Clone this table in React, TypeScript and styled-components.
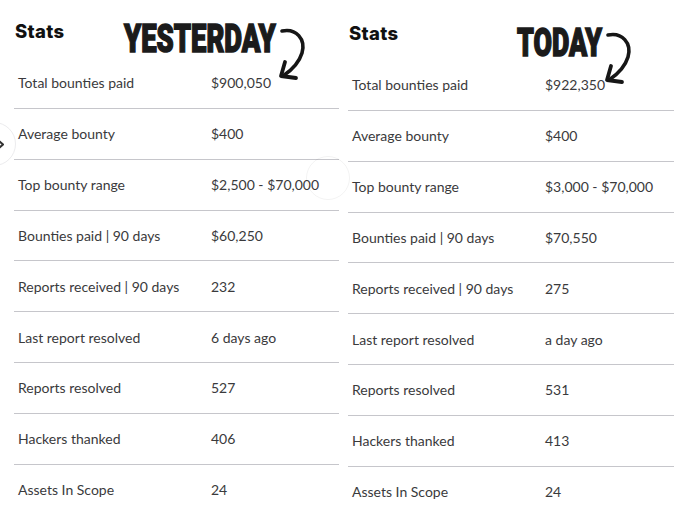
import React, { useLayoutEffect, useRef, useState } from "react";
import styled, { createGlobalStyle } from "styled-components";

const GlobalStyle = createGlobalStyle`
  html, body {
    margin: 0;
    padding: 0;
    background: #fff;
  }
  body {
    font-family: Lato, "Open Sans", Arial, sans-serif;
    -webkit-font-smoothing: antialiased;
  }
`;

const Page = styled.div`
  position: relative;
  width: 680px;
  height: 515px;
  overflow: hidden;
  display: flex;
  gap: 9px;
  padding-left: 14px;
  box-sizing: border-box;
`;

const Panel = styled.section<{ $shift: number; $width: number }>`
  position: relative;
  width: ${(p) => p.$width}px;
  padding-top: ${(p) => p.$shift}px;
`;

const Title = styled.h3`
  margin: 20px 0 16px 1px;
  height: 22px;
  line-height: 22px;
  font-family: Inter, "Noto Sans", sans-serif;
  font-weight: 800;
  font-size: 18.5px;
  color: #111;
  letter-spacing: 0.3px;
`;

const Row = styled.div`
  display: grid;
  grid-template-columns: 193px 1fr;
  align-items: center;
  height: 49.85px;
  padding-left: 4px;
  border-bottom: 1px solid #c6c6cb;
  font-size: 14px;
  color: #3a3a3c;

  &:last-child {
    border-bottom: none;
  }
`;

const Label = styled.span``;
const Value = styled.span``;

const Annotation = styled.div<{ $left: number; $top: number }>`
  position: absolute;
  left: ${(p) => p.$left}px;
  top: ${(p) => p.$top}px;
  display: flex;
  align-items: flex-start;
  gap: 1px;
`;

const StampBox = styled.div<{ $width: number }>`
  width: ${(p) => p.$width}px;
  height: 39px;
  overflow: visible;
`;

const StampText = styled.div`
  display: inline-block;
  font-family: Roboto, "DejaVu Sans", sans-serif;
  font-weight: 900;
  font-size: 39px;
  line-height: 39px;
  color: #1b1b1b;
  -webkit-text-stroke: 1.6px #1b1b1b;
  white-space: nowrap;
  transform-origin: left top;
`;

const ArrowSvg = styled.svg`
  flex: none;
  margin-top: 3px;
  width: 32px;
  height: 60px;
  overflow: visible;
`;

const NavCircle = styled.div<{ $left: number; $top: number; $faint?: boolean }>`
  position: absolute;
  left: ${(p) => p.$left}px;
  top: ${(p) => p.$top}px;
  width: 44px;
  height: 44px;
  border-radius: 50%;
  box-sizing: border-box;
  background: ${(p) => (p.$faint ? "transparent" : "#fff")};
  border: 1px solid ${(p) => (p.$faint ? "rgba(0,0,0,0.05)" : "#ececee")};
  display: flex;
  align-items: center;
  justify-content: flex-end;
  padding-right: 11px;
`;

function Stamp({ text, width }: { text: string; width: number }) {
  const ref = useRef<HTMLDivElement>(null);
  const [scale, setScale] = useState(1);
  useLayoutEffect(() => {
    if (ref.current) {
      const w = ref.current.scrollWidth;
      if (w > 0) setScale(width / w);
    }
  }, [text, width]);
  return (
    <StampBox $width={width}>
      <StampText ref={ref} style={{ transform: `scaleX(${scale})` }}>
        {text}
      </StampText>
    </StampBox>
  );
}

function Arrow() {
  return (
    <ArrowSvg viewBox="0 0 32 60">
      <path
        d="M5 8 C19 5 29 16 25 30 C22 40 15 47 6 53"
        fill="none"
        stroke="#161616"
        strokeWidth="3.6"
        strokeLinecap="round"
      />
      <path
        d="M8 39 L4 53 L19 55"
        fill="none"
        stroke="#161616"
        strokeWidth="3.8"
        strokeLinecap="round"
        strokeLinejoin="round"
      />
    </ArrowSvg>
  );
}

type Stat = [string, string];

const yesterday: Stat[] = [
  ["Total bounties paid", "$900,050"],
  ["Average bounty", "$400"],
  ["Top bounty range", "$2,500 - $70,000"],
  ["Bounties paid | 90 days", "$60,250"],
  ["Reports received | 90 days", "232"],
  ["Last report resolved", "6 days ago"],
  ["Reports resolved", "527"],
  ["Hackers thanked", "406"],
  ["Assets In Scope", "24"],
];

const today: Stat[] = [
  ["Total bounties paid", "$922,350"],
  ["Average bounty", "$400"],
  ["Top bounty range", "$3,000 - $70,000"],
  ["Bounties paid | 90 days", "$70,550"],
  ["Reports received | 90 days", "275"],
  ["Last report resolved", "a day ago"],
  ["Reports resolved", "531"],
  ["Hackers thanked", "413"],
  ["Assets In Scope", "24"],
];

function StatsTable({ stats }: { stats: Stat[] }) {
  return (
    <div>
      <Title>Stats</Title>
      <div>
        {stats.map(([label, value]) => (
          <Row key={label}>
            <Label>{label}</Label>
            <Value>{value}</Value>
          </Row>
        ))}
      </div>
    </div>
  );
}

export default function App() {
  return (
    <>
      <GlobalStyle />
      <Page>
        <Panel $shift={0} $width={325}>
          <StatsTable stats={yesterday} />
          <Annotation $left={110} $top={20}>
            <Stamp text="YESTERDAY" width={152} />
            <Arrow />
          </Annotation>
        </Panel>
        <Panel $shift={2} $width={326}>
          <StatsTable stats={today} />
          <Annotation $left={169} $top={24}>
            <Stamp text="TODAY" width={85} />
            <Arrow />
          </Annotation>
        </Panel>
        <NavCircle $left={-28} $top={122}>
          <svg width="6" height="9" viewBox="0 0 6 9">
            <path d="M1 1 L5 4.5 L1 8" fill="none" stroke="#333" strokeWidth="2" />
          </svg>
        </NavCircle>
        <NavCircle $left={306} $top={156} $faint />
      </Page>
    </>
  );
}
